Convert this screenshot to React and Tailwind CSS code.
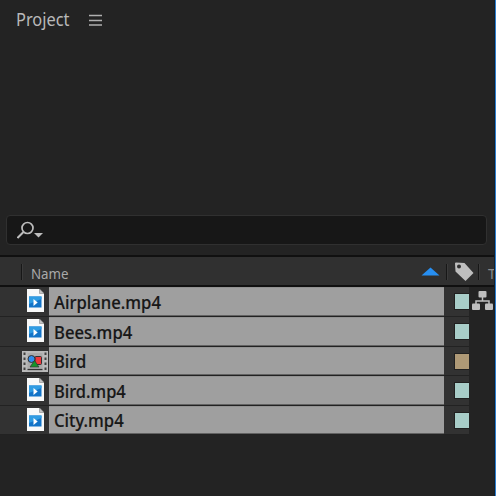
const rows = [
  { name: 'Airplane.mp4', height: 'h-[30px]', width: 'scale-x-[0.925]', color: 'bg-[#a8cdc8]' },
  { name: 'Bees.mp4', height: 'h-[30px]', width: 'scale-x-[0.925]', color: 'bg-[#a8cdc8]' },
  { name: 'Bird', height: 'h-[29px]', width: 'scale-x-[0.92]', color: 'bg-[#ae9976]', comp: true },
  { name: 'Bird.mp4', height: 'h-[30px]', width: 'scale-x-[0.915]', color: 'bg-[#a8cdc8]' },
  { name: 'City.mp4', height: 'h-[29px]', width: 'scale-x-[0.925]', color: 'bg-[#a8cdc8]' },
];

function VideoIcon() {
  return (
    <svg width="17" height="23" viewBox="0 0 17 23" className="block">
      <path d="M0 0H12.5L17 4.5V23H0Z" fill="#f8f9f9" />
      <path d="M12.5 0V4.5H17Z" fill="#c4c4c4" stroke="#777" strokeWidth=".5" />
      <rect x="2" y="7.5" width="12.5" height="11" fill="#1374c8" />
      <path d="M2 7.5H14.5V10L2 15Z" fill="#2f9ce3" />
      <path d="M6.5 10L10.7 13.5L6.5 17Z" fill="#fff" />
    </svg>
  );
}

function CompIcon() {
  return (
    <svg width="26" height="21" viewBox="0 0 26 21" className="block">
      <rect width="26" height="21" fill="#b9b9b9" />
      <rect x="5.5" y="2" width="15" height="15.5" fill="#aaa" />
      <path d="M2.5 1.5V20M23.5 1.5V20" stroke="#404040" strokeWidth="2" strokeDasharray="2.5 2.5" />
      <rect x="13" y="5.5" width="6.5" height="8" rx="1" fill="#f0383c" stroke="#333" />
      <circle cx="9.5" cy="8" r="3.5" fill="#2f8cec" stroke="#333" />
      <path d="M8 16L12.5 9.5L17 16Z" fill="#15942b" stroke="#333" strokeWidth=".7" />
      <path d="M5.5 18.5H20.5" stroke="#333" strokeWidth="1.3" />
    </svg>
  );
}

function FlowIcon() {
  return (
    <svg width="21" height="20" viewBox="0 0 21 20" className="block">
      <path d="M10.5 5V10M4 14V10H17V14" fill="none" stroke="#bebebe" strokeWidth="1.5" />
      <rect x="6.5" y="0" width="8" height="6.5" rx="1" fill="#bebebe" />
      <rect x="0" y="12.5" width="8" height="6.5" rx="1" fill="#bebebe" />
      <rect x="13" y="12.5" width="8" height="6.5" rx="1" fill="#bebebe" />
    </svg>
  );
}

function Divider() {
  return <div className="h-4 w-[2px] shrink-0 border-r border-[#3b3b3b] bg-[#171717]" />;
}

export default function App() {
  return (
    <div className="flex h-[496px] w-[496px] overflow-hidden bg-[#232323] font-['Noto_Sans','Open_Sans',sans-serif]">
      <main className="flex w-[494px] shrink-0 flex-col overflow-hidden">
        <header className="flex h-[215px] shrink-0 items-start pl-4">
          <h1 className="mt-[7px] w-[73px] origin-left scale-x-[0.91] whitespace-nowrap text-[18px] leading-6 text-[#b9b9b9]">Project</h1>
          <svg width="13" height="12" viewBox="0 0 13 12" className="mt-[14px]">
            <path d="M0 1.5H13M0 6.5H13M0 11H13" stroke="#b0b0b0" strokeWidth="1.5" />
          </svg>
        </header>
        <div className="ml-[6px] flex h-[30px] w-[481px] shrink-0 items-start rounded border border-[#303030] bg-[#171717]">
          <svg width="30" height="20" viewBox="0 0 30 20" className="ml-[10px] mt-[5px]">
            <circle cx="10.5" cy="7" r="5.5" fill="none" stroke="#bdbdbd" strokeWidth="1.7" />
            <path d="M6.5 11L0.5 17" stroke="#bdbdbd" strokeWidth="2" />
            <path d="M17 12H26L21.5 16.5Z" fill="#bdbdbd" />
          </svg>
        </div>
        <div className="mt-[10px] flex h-8 shrink-0 items-start border-y-2 border-[#101010] bg-[#303030] pt-[7px]">
          <div className="w-[21px] shrink-0" />
          <Divider />
          <span className="ml-[8px] w-[390px] shrink-0 origin-left scale-x-[0.95] text-[14px] leading-[19px] text-[#a9a9a9]">
            Name
          </span>
          <svg width="19" height="9" viewBox="0 0 19 9" className="mt-[3px] shrink-0">
            <path d="M0.5 8.5L9.5 0.5L18.5 8.5Z" fill="#278ff2" />
          </svg>
          <div className="w-[6px] shrink-0" />
          <Divider />
          <svg width="20" height="20" viewBox="0 0 20 20" className="-mt-[2px] ml-[6px] shrink-0">
            <path fillRule="evenodd" d="M1 1.5Q1 .5 2 .5L10.5 1L19.5 11L11.5 19L1.5 9.5ZM5 2.5A2 2 0 1 0 5 6.5A2 2 0 1 0 5 2.5Z" fill="#bebebe" />
          </svg>
          <div className="w-[4px] shrink-0" />
          <Divider />
          <span className="ml-[8px] shrink-0 text-[14px] leading-[19px] text-[#8a8a8a]">T</span>
        </div>
        <div className="flex shrink-0 items-start">
          <ul className="w-[469px] shrink-0">
            {rows.map((row) => (
              <li key={row.name} className={`${row.height} flex border-b border-[#222] bg-[#323232]`}>
                <div className={`flex w-[49px] shrink-0 ${row.comp ? 'pl-[22px] pt-[4px]' : 'pl-[27px] pt-[2px]'}`}>
                  {row.comp ? <CompIcon /> : <VideoIcon />}
                </div>
                <div className="flex w-[395px] shrink-0 items-center border-b border-t border-b-[#626262] border-t-[#939393] bg-[#9f9f9f] pl-[5px]">
                  <span className={`${row.width} origin-left whitespace-nowrap text-[18px] font-medium leading-6 text-[#171717] [-webkit-text-stroke:0.2px_#171717]`}>
                    {row.name}
                  </span>
                </div>
                <div className={`ml-[10px] mt-[6px] h-[17px] w-[15px] shrink-0 border-y border-l border-[#202020] ${row.color}`} />
              </li>
            ))}
          </ul>
          <div className="ml-[3px] mt-[4px]">
            <FlowIcon />
          </div>
        </div>
      </main>
      <div className="w-px shrink-0 bg-[#15202b]" />
      <div className="w-px shrink-0 bg-[#2d7fd0]" />
    </div>
  );
}
